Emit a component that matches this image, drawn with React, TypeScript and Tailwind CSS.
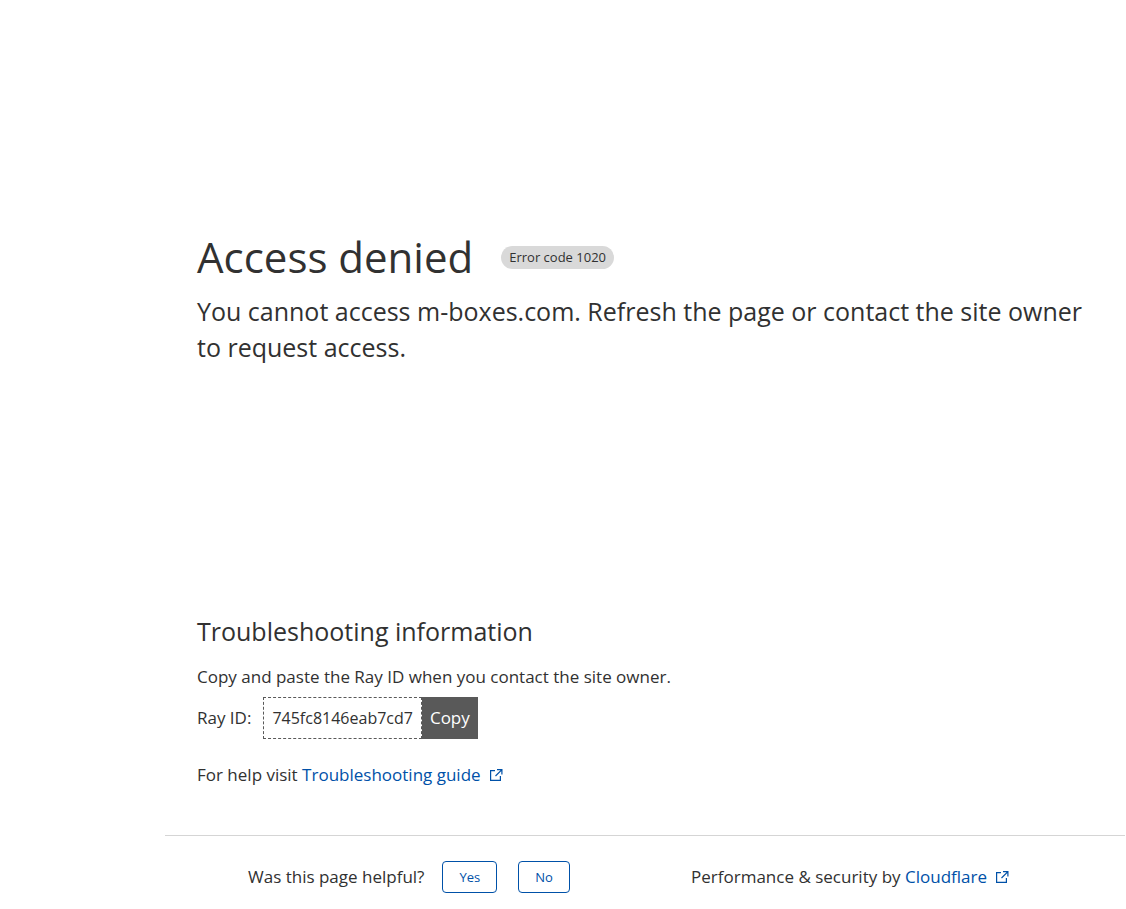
import { useState } from "react";

const rayId = "745fc8146eab7cd7";

export default function App() {
  const [copied, setCopied] = useState(false);
  const [answered, setAnswered] = useState(false);

  const copyRayId = () => {
    navigator.clipboard?.writeText(rayId);
    setCopied(true);
  };

  return (
    <div className="min-h-screen bg-white pl-[165px] pr-px font-['Open_Sans','Noto_Sans',sans-serif] text-[17px] leading-6 text-[#313131]">
      <div className="w-full max-w-[960px]">
        <header className="px-8 pt-[227px]">
          <div className="flex items-center gap-7">
            <h1 className="text-[42px] leading-[60px]">Access denied</h1>
            <span className="rounded-full bg-[#d9d9d9] px-2 text-[13px] leading-[23px]">
              Error code 1020
            </span>
          </div>
          <h2 className="mt-[6px] text-[25px] leading-9">
            You cannot access m-boxes.com. Refresh the page or contact the site owner to request
            access.
          </h2>
        </header>

        <main className="px-8 pt-[248px] pb-12">
          <h2 className="text-[25px] leading-9">Troubleshooting information</h2>
          <p className="mt-4">Copy and paste the Ray ID when you contact the site owner.</p>
          <div className="mt-2 flex items-center">
            <span className="mr-3">Ray ID:</span>
            <code className="border border-dashed border-[#595959] px-2 font-[inherit] text-base leading-10">
              {rayId}
            </code>
            <button
              className="bg-[#595959] px-2 leading-[42px] text-white"
              type="button"
              onClick={copyRayId}
            >
              {copied ? "Copied" : "Copy"}
            </button>
          </div>
          <p className="mt-6">
            For help visit{" "}
            <ExternalLink href="https://www.cloudflare.com/troubleshooting">
              Troubleshooting guide
            </ExternalLink>
          </p>
        </main>

        <footer className="flex items-center justify-between border-t border-[#d5d5d5] pt-[25px] pr-[116px] pb-4 pl-[83px]">
          {answered ? (
            <p>Thank you for your feedback!</p>
          ) : (
            <div className="flex items-center gap-[18px]">
              <span>Was this page helpful?</span>
              <div className="flex gap-[21px]">
                <FeedbackButton label="Yes" onClick={() => setAnswered(true)} />
                <FeedbackButton label="No" onClick={() => setAnswered(true)} />
              </div>
            </div>
          )}
          <p>
            Performance &amp; security by{" "}
            <ExternalLink href="https://www.cloudflare.com">Cloudflare</ExternalLink>
          </p>
        </footer>
      </div>
    </div>
  );
}

function FeedbackButton({ label, onClick }: { label: string; onClick: () => void }) {
  return (
    <button
      className="rounded border border-[#0051a8] px-4 text-[13px] leading-[30px] text-[#0051a8]"
      type="button"
      onClick={onClick}
    >
      {label}
    </button>
  );
}

function ExternalLink({ href, children }: { href: string; children: string }) {
  return (
    <a className="text-[#0051a8] hover:underline" href={href}>
      {children}
      <ExternalIcon />
    </a>
  );
}

function ExternalIcon() {
  return (
    <svg
      aria-hidden="true"
      className="ml-2 inline-block h-3.5 w-3.5 align-[-1px]"
      viewBox="0 0 14 14"
      fill="none"
      stroke="currentColor"
      strokeWidth="1.2"
    >
      <path d="M6 2.6H1.6v9.8h9.8V8M8 1.6h4.9V6.5M12.7 1.8L6.5 8" />
    </svg>
  );
}
